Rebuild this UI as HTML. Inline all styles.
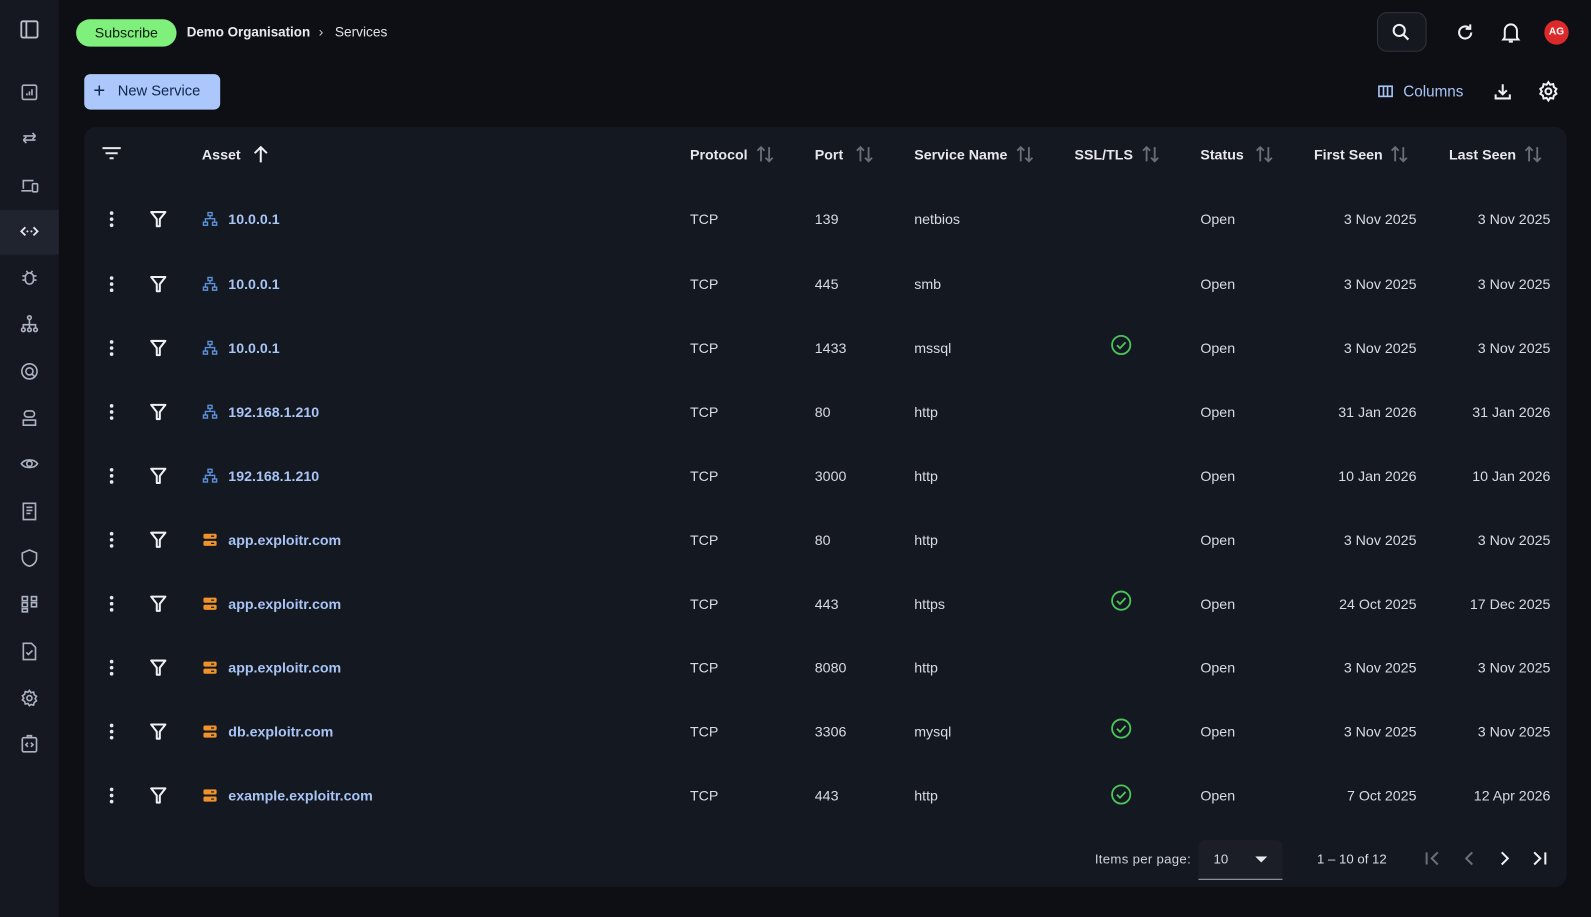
<!DOCTYPE html>
<html><head><meta charset="utf-8"><style>
*{margin:0;padding:0;box-sizing:border-box}
html,body{width:1591px;height:917px;overflow:hidden;background:#0e0f14}
body{font-family:"Liberation Sans",sans-serif;color:#e3e5ea;position:relative;font-size:14px}
#w{position:absolute;left:0;top:0;width:1568px;height:904px;transform:scale(1.01467);transform-origin:0 0}
.side{position:absolute;left:0;top:0;width:58px;height:917px;background:#151821}
.si{position:absolute;left:19px;width:20px;height:20px}
.act{position:absolute;left:0;top:207px;width:58px;height:44px;background:#20242e}
.a{position:absolute}
.card{position:absolute;left:83px;top:125px;width:1461px;height:749px;background:#141821;border-radius:12px}
.h{position:absolute;top:144px;font-weight:bold;font-size:14px;color:#e6e8ec}
.r{position:absolute;left:0;width:1591px;height:20px}
.r .c{position:absolute;top:0;line-height:20px;font-size:14px;color:#d8dbe1}
.r .lk{color:#a8c4f5;font-weight:bold}
.r .rt{text-align:right;width:120px}
svg{display:block}
</style></head><body>
<svg width="0" height="0" style="position:absolute">
<symbol id="keb" viewBox="0 0 20 20"><circle cx="10" cy="4" r="1.8" fill="#e6e8ec"/><circle cx="10" cy="10" r="1.8" fill="#e6e8ec"/><circle cx="10" cy="16" r="1.8" fill="#e6e8ec"/></symbol>
<symbol id="fil" viewBox="0 0 20 20"><path d="M3 3h14l-5.5 7v7h-3v-7z" fill="none" stroke="#eef0f3" stroke-width="2" stroke-linejoin="round"/></symbol>
<symbol id="net" viewBox="0 0 16 16"><g fill="none" stroke="#5b8fd6" stroke-width="1.4"><rect x="6" y="1.5" width="4" height="3"/><rect x="1.5" y="11" width="4" height="3"/><rect x="10.5" y="11" width="4" height="3"/><path d="M8 4.5v3M3.5 11V7.5h9V11"/></g></symbol>
<symbol id="srv" viewBox="0 0 16 16"><rect x="1.5" y="2" width="13" height="5" rx="1.5" fill="#f0922b"/><rect x="1.5" y="9" width="13" height="5" rx="1.5" fill="#f0922b"/><path d="M9 4.5h3M9 11.5h3" stroke="#141821" stroke-width="1.2"/></symbol>
<symbol id="chk" viewBox="0 0 22 22"><circle cx="11" cy="11" r="9" fill="none" stroke="#4cc45a" stroke-width="1.8"/><path d="M6.8 11.2l3 3 5.5-5.8" fill="none" stroke="#4cc45a" stroke-width="1.8"/></symbol>
<symbol id="srt" viewBox="0 0 20 20"><g fill="none" stroke="#6a6e78" stroke-width="1.8"><path d="M6 17V3M2.5 6.5L6 3l3.5 3.5M14 3v14M10.5 13.5L14 17l3.5-3.5"/></g></symbol>
</svg>
<div id="w">
<div class="side">
<svg class="si" style="top:19px" viewBox="0 0 20 20"><rect x="2" y="2" width="16" height="16" rx="1.5" fill="none" stroke="#b9c0cc" stroke-width="1.8"/><path d="M7 2v16" stroke="#b9c0cc" stroke-width="1.8"/></svg>
<div class="act"></div>
<svg class="si" style="top:81px" viewBox="0 0 20 20"><rect x="3" y="3" width="14" height="14" rx="1.5" fill="none" stroke="#aab1c0" stroke-width="1.6"/><path d="M7.5 13v-2M10 13V9M12.5 13V7" stroke="#aab1c0" stroke-width="1.6"/></svg>
<svg class="si" style="top:126px" viewBox="0 0 20 20"><path d="M4 12h12M4 12l3 3M4 12l3-3M16 8H4M16 8l-3-3M16 8l-3 3" fill="none" stroke="#aab1c0" stroke-width="1.6"/></svg>
<svg class="si" style="top:173px" viewBox="0 0 20 20"><path d="M4 13V5h10M2 15h10" fill="none" stroke="#aab1c0" stroke-width="1.6"/><rect x="13" y="8" width="5" height="8" rx="1" fill="none" stroke="#aab1c0" stroke-width="1.6"/></svg>
<svg class="si" style="top:218px" viewBox="0 0 20 20"><path d="M6 6l-4 4 4 4M14 6l4 4-4 4" fill="none" stroke="#e6e8ec" stroke-width="1.8"/><circle cx="8" cy="10" r="1" fill="#e6e8ec"/><circle cx="12" cy="10" r="1" fill="#e6e8ec"/></svg>
<svg class="si" style="top:264px" viewBox="0 0 20 20"><rect x="6" y="5" width="8" height="11" rx="4" fill="none" stroke="#aab1c0" stroke-width="1.6"/><path d="M3 8h3M14 8h3M3 12h3M14 12h3M7 3l1.5 2M13 3l-1.5 2" stroke="#aab1c0" stroke-width="1.6"/></svg>
<svg class="si" style="top:309px" viewBox="0 0 20 20"><g fill="none" stroke="#aab1c0" stroke-width="1.6"><circle cx="10" cy="4" r="1.8"/><circle cx="4" cy="16" r="1.8"/><circle cx="10" cy="16" r="1.8"/><circle cx="16" cy="16" r="1.8"/><path d="M10 6v8M4 14v-3h12v3"/></g></svg>
<svg class="si" style="top:356px" viewBox="0 0 20 20"><g fill="none" stroke="#aab1c0" stroke-width="1.6"><circle cx="10" cy="10" r="7.5"/><circle cx="10" cy="10" r="3.5"/><path d="M12.5 12.5l3 3"/></g></svg>
<svg class="si" style="top:402px" viewBox="0 0 20 20"><g fill="none" stroke="#aab1c0" stroke-width="1.6"><rect x="5" y="3" width="10" height="6" rx="3"/><path d="M4 12h12v5H4z"/></g></svg>
<svg class="si" style="top:447px" viewBox="0 0 20 20"><g fill="none" stroke="#aab1c0" stroke-width="1.6"><path d="M2 10c3-5 13-5 16 0-3 5-13 5-16 0z"/><circle cx="10" cy="10" r="2.6"/></g></svg>
<svg class="si" style="top:494px" viewBox="0 0 20 20"><g fill="none" stroke="#aab1c0" stroke-width="1.6"><path d="M4 2h12v16H4z"/><path d="M7 6h6M7 9h6M7 12h4"/></g></svg>
<svg class="si" style="top:540px" viewBox="0 0 20 20"><path d="M10 2l7 3v5c0 4-3 7-7 8-4-1-7-4-7-8V5z" fill="none" stroke="#aab1c0" stroke-width="1.6"/></svg>
<svg class="si" style="top:585px" viewBox="0 0 20 20"><g fill="none" stroke="#aab1c0" stroke-width="1.6"><rect x="3" y="3" width="5" height="4"/><rect x="12" y="3" width="5" height="4"/><rect x="3" y="9" width="5" height="4"/><rect x="12" y="9" width="5" height="4"/><rect x="3" y="15" width="5" height="3"/></g></svg>
<svg class="si" style="top:632px" viewBox="0 0 20 20"><g fill="none" stroke="#aab1c0" stroke-width="1.6"><path d="M4 2h8l4 4v12H4z"/><path d="M7 11l2 2 4-4"/></g></svg>
<svg class="si" style="top:678px" viewBox="0 0 20 20"><g fill="none" stroke="#aab1c0" stroke-width="1.6"><circle cx="10" cy="10" r="2.5"/><path d="M10 2.5l1.5 2.2 2.6-.6.6 2.6 2.2 1.5-1.3 2.3 1.3 2.3-2.2 1.5-.6 2.6-2.6-.6L10 17.5l-1.5-2.2-2.6.6-.6-2.6-2.2-1.5L4.4 10 3.1 7.7l2.2-1.5.6-2.6 2.6.6z"/></g></svg>
<svg class="si" style="top:723px" viewBox="0 0 20 20"><g fill="none" stroke="#aab1c0" stroke-width="1.6"><rect x="3" y="4" width="14" height="14" rx="1.5"/><path d="M8 2h4v2H8zM8.5 9l-2 2 2 2M11.5 9l2 2-2 2"/></g></svg>
</div>

<div class="a" style="left:75px;top:19px;width:99px;height:27px;background:#7ef07b;border-radius:14px;color:#0d1a0d;font-size:14px;line-height:27px;text-align:center">Subscribe</div>
<div class="a" style="left:184px;top:24px;font-size:13.2px;font-weight:bold;color:#e8eaee">Demo Organisation</div>
<div class="a" style="left:314px;top:23px;font-size:14px;color:#c5c9d1">›</div>
<div class="a" style="left:330px;top:24px;font-size:13.5px;color:#e0e3e8">Services</div>

<div class="a" style="left:1357px;top:12px;width:49px;height:39px;border:1px solid #2e323b;border-radius:10px;background:#16181f"></div>
<svg class="a" style="left:1370px;top:21px" width="22" height="22" viewBox="0 0 22 22"><circle cx="9" cy="9" r="5.5" fill="none" stroke="#eef0f3" stroke-width="2"/><path d="M13 13l5 5" stroke="#eef0f3" stroke-width="2.2"/></svg>
<svg class="a" style="left:1433px;top:21px" width="22" height="22" viewBox="0 0 22 22"><path d="M17 11a6 6 0 1 1-2-4.5" fill="none" stroke="#eef0f3" stroke-width="2"/><path d="M16 3v4.5h-4.5" fill="none" stroke="#eef0f3" stroke-width="2"/></svg>
<svg class="a" style="left:1478px;top:20px" width="22" height="24" viewBox="0 0 22 24"><path d="M5 17V10a6 6 0 0 1 12 0v7l1.5 2h-15z" fill="none" stroke="#eef0f3" stroke-width="1.9"/><path d="M9 21h4" stroke="#eef0f3" stroke-width="2"/></svg>
<div class="a" style="left:1522px;top:20px;width:24px;height:24px;border-radius:12px;background:#dc2a2a;color:#fff;font-size:10px;font-weight:bold;line-height:24px;text-align:center">AG</div>

<div class="a" style="left:83px;top:73px;width:134px;height:35px;background:#abc7fb;border-radius:6px;color:#10284a;font-size:14.5px;line-height:35px"><span style="position:absolute;left:9px;font-size:20px">+</span><span style="position:absolute;left:33px">New Service</span></div>
<svg class="a" style="left:1358px;top:83px" width="15" height="14" viewBox="0 0 15 14"><rect x="1" y="2" width="13" height="10" fill="none" stroke="#a8c4f5" stroke-width="1.6"/><path d="M5.5 2v10M9.5 2v10" stroke="#a8c4f5" stroke-width="1.6"/></svg>
<div class="a" style="left:1383px;top:82px;font-size:15px;color:#a8c4f5">Columns</div>
<svg class="a" style="left:1471px;top:80px" width="20" height="20" viewBox="0 0 20 20"><path d="M10 3v10M6 9l4 4 4-4M3 13v4h14v-4" fill="none" stroke="#eef0f3" stroke-width="2"/></svg>
<svg class="a" style="left:1515px;top:79px" width="22" height="22" viewBox="0 0 20 20"><g fill="none" stroke="#eef0f3" stroke-width="1.8"><circle cx="10" cy="10" r="2.6"/><path d="M10 1.8l1.6 2.3 2.7-.6.6 2.7 2.3 1.6-1.3 2.2 1.3 2.2-2.3 1.6-.6 2.7-2.7-.6L10 18.2l-1.6-2.3-2.7.6-.6-2.7-2.3-1.6L4.1 10 2.8 7.8l2.3-1.6.6-2.7 2.7.6z"/></g></svg>

<div class="card"></div>
<svg class="a" style="left:100px;top:143px" width="20" height="16" viewBox="0 0 20 16"><path d="M1 3h18M4 8h12M8 13h4" stroke="#e6e8ec" stroke-width="2"/></svg>
<div class="h" style="left:199px">Asset</div>
<svg class="a" style="left:247px;top:142px" width="20" height="20" viewBox="0 0 20 20"><path d="M10 18V3M4 9l6-6 6 6" fill="none" stroke="#eef0f3" stroke-width="2"/></svg>
<div class="h" style="left:680px">Protocol</div><svg class="a" style="left:744px;top:142px" width="20" height="20"><use href="#srt"/></svg>
<div class="h" style="left:803px">Port</div><svg class="a" style="left:842px;top:142px" width="20" height="20"><use href="#srt"/></svg>
<div class="h" style="left:901px">Service Name</div><svg class="a" style="left:1000px;top:142px" width="20" height="20"><use href="#srt"/></svg>
<div class="h" style="left:1059px">SSL/TLS</div><svg class="a" style="left:1124px;top:142px" width="20" height="20"><use href="#srt"/></svg>
<div class="h" style="left:1183px">Status</div><svg class="a" style="left:1236px;top:142px" width="20" height="20"><use href="#srt"/></svg>
<div class="h" style="left:1295px">First Seen</div><svg class="a" style="left:1369px;top:142px" width="20" height="20"><use href="#srt"/></svg>
<div class="h" style="left:1428px">Last Seen</div><svg class="a" style="left:1501px;top:142px" width="20" height="20"><use href="#srt"/></svg>

<div class="r" style="top:206px"><svg class="c" style="left:100px" width="20" height="20"><use href="#keb"/></svg><svg class="c" style="left:146px" width="20" height="20"><use href="#fil"/></svg><svg class="c" style="left:199px;top:2px" width="16" height="16"><use href="#net"/></svg><span class="c lk" style="left:225px">10.0.0.1</span><span class="c" style="left:680px">TCP</span><span class="c" style="left:803px">139</span><span class="c" style="left:901px">netbios</span><span class="c" style="left:1183px">Open</span><span class="c rt" style="left:1276px">3 Nov 2025</span><span class="c rt" style="left:1408px">3 Nov 2025</span></div>
<div class="r" style="top:270px"><svg class="c" style="left:100px" width="20" height="20"><use href="#keb"/></svg><svg class="c" style="left:146px" width="20" height="20"><use href="#fil"/></svg><svg class="c" style="left:199px;top:2px" width="16" height="16"><use href="#net"/></svg><span class="c lk" style="left:225px">10.0.0.1</span><span class="c" style="left:680px">TCP</span><span class="c" style="left:803px">445</span><span class="c" style="left:901px">smb</span><span class="c" style="left:1183px">Open</span><span class="c rt" style="left:1276px">3 Nov 2025</span><span class="c rt" style="left:1408px">3 Nov 2025</span></div>
<div class="r" style="top:333px"><svg class="c" style="left:100px" width="20" height="20"><use href="#keb"/></svg><svg class="c" style="left:146px" width="20" height="20"><use href="#fil"/></svg><svg class="c" style="left:199px;top:2px" width="16" height="16"><use href="#net"/></svg><span class="c lk" style="left:225px">10.0.0.1</span><span class="c" style="left:680px">TCP</span><span class="c" style="left:803px">1433</span><span class="c" style="left:901px">mssql</span><svg class="c" style="left:1094px;top:-4px" width="22" height="22"><use href="#chk"/></svg><span class="c" style="left:1183px">Open</span><span class="c rt" style="left:1276px">3 Nov 2025</span><span class="c rt" style="left:1408px">3 Nov 2025</span></div>
<div class="r" style="top:396px"><svg class="c" style="left:100px" width="20" height="20"><use href="#keb"/></svg><svg class="c" style="left:146px" width="20" height="20"><use href="#fil"/></svg><svg class="c" style="left:199px;top:2px" width="16" height="16"><use href="#net"/></svg><span class="c lk" style="left:225px">192.168.1.210</span><span class="c" style="left:680px">TCP</span><span class="c" style="left:803px">80</span><span class="c" style="left:901px">http</span><span class="c" style="left:1183px">Open</span><span class="c rt" style="left:1276px">31 Jan 2026</span><span class="c rt" style="left:1408px">31 Jan 2026</span></div>
<div class="r" style="top:459px"><svg class="c" style="left:100px" width="20" height="20"><use href="#keb"/></svg><svg class="c" style="left:146px" width="20" height="20"><use href="#fil"/></svg><svg class="c" style="left:199px;top:2px" width="16" height="16"><use href="#net"/></svg><span class="c lk" style="left:225px">192.168.1.210</span><span class="c" style="left:680px">TCP</span><span class="c" style="left:803px">3000</span><span class="c" style="left:901px">http</span><span class="c" style="left:1183px">Open</span><span class="c rt" style="left:1276px">10 Jan 2026</span><span class="c rt" style="left:1408px">10 Jan 2026</span></div>
<div class="r" style="top:522px"><svg class="c" style="left:100px" width="20" height="20"><use href="#keb"/></svg><svg class="c" style="left:146px" width="20" height="20"><use href="#fil"/></svg><svg class="c" style="left:199px;top:2px" width="16" height="16"><use href="#srv"/></svg><span class="c lk" style="left:225px">app.exploitr.com</span><span class="c" style="left:680px">TCP</span><span class="c" style="left:803px">80</span><span class="c" style="left:901px">http</span><span class="c" style="left:1183px">Open</span><span class="c rt" style="left:1276px">3 Nov 2025</span><span class="c rt" style="left:1408px">3 Nov 2025</span></div>
<div class="r" style="top:585px"><svg class="c" style="left:100px" width="20" height="20"><use href="#keb"/></svg><svg class="c" style="left:146px" width="20" height="20"><use href="#fil"/></svg><svg class="c" style="left:199px;top:2px" width="16" height="16"><use href="#srv"/></svg><span class="c lk" style="left:225px">app.exploitr.com</span><span class="c" style="left:680px">TCP</span><span class="c" style="left:803px">443</span><span class="c" style="left:901px">https</span><svg class="c" style="left:1094px;top:-4px" width="22" height="22"><use href="#chk"/></svg><span class="c" style="left:1183px">Open</span><span class="c rt" style="left:1276px">24 Oct 2025</span><span class="c rt" style="left:1408px">17 Dec 2025</span></div>
<div class="r" style="top:648px"><svg class="c" style="left:100px" width="20" height="20"><use href="#keb"/></svg><svg class="c" style="left:146px" width="20" height="20"><use href="#fil"/></svg><svg class="c" style="left:199px;top:2px" width="16" height="16"><use href="#srv"/></svg><span class="c lk" style="left:225px">app.exploitr.com</span><span class="c" style="left:680px">TCP</span><span class="c" style="left:803px">8080</span><span class="c" style="left:901px">http</span><span class="c" style="left:1183px">Open</span><span class="c rt" style="left:1276px">3 Nov 2025</span><span class="c rt" style="left:1408px">3 Nov 2025</span></div>
<div class="r" style="top:711px"><svg class="c" style="left:100px" width="20" height="20"><use href="#keb"/></svg><svg class="c" style="left:146px" width="20" height="20"><use href="#fil"/></svg><svg class="c" style="left:199px;top:2px" width="16" height="16"><use href="#srv"/></svg><span class="c lk" style="left:225px">db.exploitr.com</span><span class="c" style="left:680px">TCP</span><span class="c" style="left:803px">3306</span><span class="c" style="left:901px">mysql</span><svg class="c" style="left:1094px;top:-4px" width="22" height="22"><use href="#chk"/></svg><span class="c" style="left:1183px">Open</span><span class="c rt" style="left:1276px">3 Nov 2025</span><span class="c rt" style="left:1408px">3 Nov 2025</span></div>
<div class="r" style="top:774px"><svg class="c" style="left:100px" width="20" height="20"><use href="#keb"/></svg><svg class="c" style="left:146px" width="20" height="20"><use href="#fil"/></svg><svg class="c" style="left:199px;top:2px" width="16" height="16"><use href="#srv"/></svg><span class="c lk" style="left:225px">example.exploitr.com</span><span class="c" style="left:680px">TCP</span><span class="c" style="left:803px">443</span><span class="c" style="left:901px">http</span><svg class="c" style="left:1094px;top:-2px" width="22" height="22"><use href="#chk"/></svg><span class="c" style="left:1183px">Open</span><span class="c rt" style="left:1276px">7 Oct 2025</span><span class="c rt" style="left:1408px">12 Apr 2026</span></div>

<div class="a" style="left:1079px;top:839px;font-size:13px;color:#d0d3d9;letter-spacing:0.3px">Items per page:</div>
<div class="a" style="left:1181px;top:828px;width:83px;height:39px;background:#1b1e26;border-radius:6px 6px 0 0;border-bottom:1.5px solid #d8dbe1"></div>
<div class="a" style="left:1196px;top:839px;font-size:13px;color:#d8dbe1">10</div>
<svg class="a" style="left:1237px;top:844px" width="12" height="7"><path d="M0 0h12L6 6z" fill="#e6e8ec"/></svg>
<div class="a" style="left:1298px;top:839px;font-size:13px;color:#d8dbe1">1 – 10 of 12</div>
<svg class="a" style="left:1403px;top:837px" width="20" height="18" viewBox="0 0 20 18"><path d="M3 3v12M14 3l-6 6 6 6" fill="none" stroke="#6a6e78" stroke-width="2"/></svg>
<svg class="a" style="left:1439px;top:837px" width="18" height="18" viewBox="0 0 18 18"><path d="M12 3L6 9l6 6" fill="none" stroke="#6a6e78" stroke-width="2"/></svg>
<svg class="a" style="left:1474px;top:837px" width="18" height="18" viewBox="0 0 18 18"><path d="M6 3l6 6-6 6" fill="none" stroke="#eef0f3" stroke-width="2"/></svg>
<svg class="a" style="left:1508px;top:837px" width="20" height="18" viewBox="0 0 20 18"><path d="M4 3l6 6-6 6M15 3v12" fill="none" stroke="#eef0f3" stroke-width="2"/></svg>
</div>
</body></html>
